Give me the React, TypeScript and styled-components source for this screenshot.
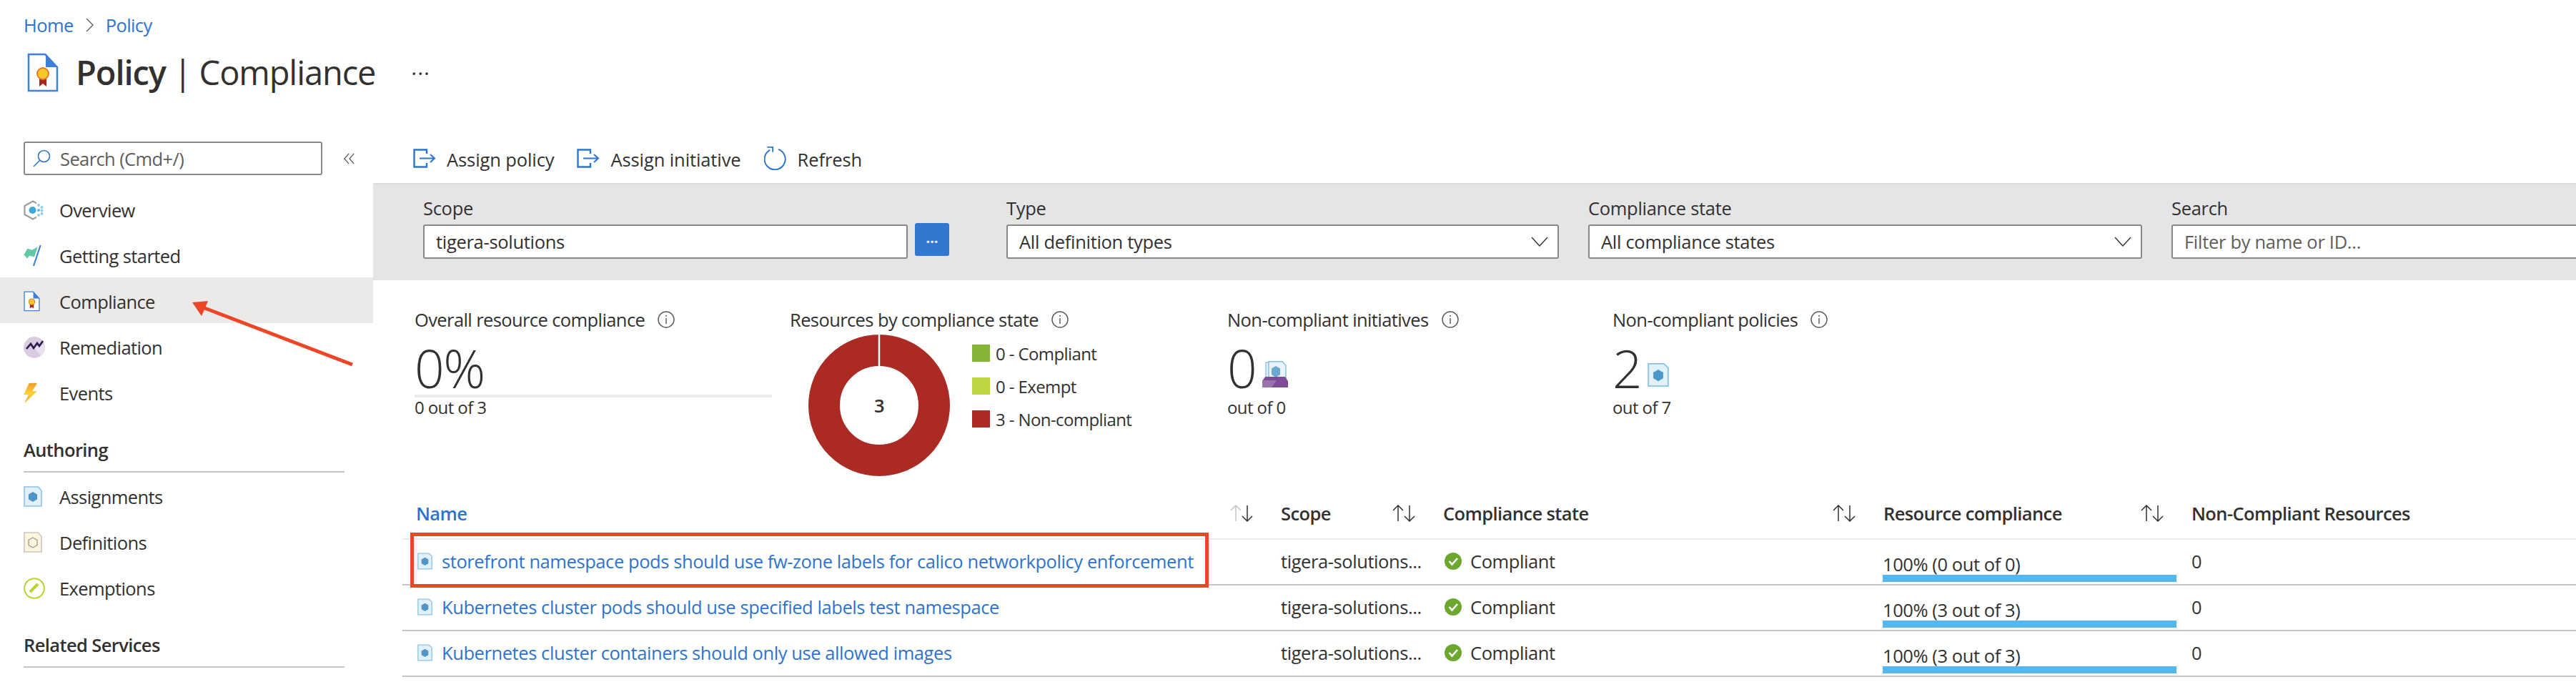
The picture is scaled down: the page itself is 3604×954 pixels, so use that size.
import React from 'react';
import styled, { createGlobalStyle } from 'styled-components';

const GlobalStyle = createGlobalStyle`
  html, body {
    margin: 0;
    padding: 0;
    background: #fff;
    font-family: "Open Sans", "Noto Sans", sans-serif;
    color: #323130;
  }
  * { box-sizing: border-box; }
`;

const LINK = '#2e74cf';
const TEXT = '#323130';

const Page = styled.div`
  position: relative;
  width: 3604px;
  height: 954px;
  overflow: hidden;
  font-size: 25.5px;
  letter-spacing: -0.6px;
`;

const Header = styled.header`
  height: 198px;
  padding: 17px 0 0 33px;
`;

const Crumbs = styled.nav`
  display: flex;
  align-items: center;
  gap: 17px;
  height: 36px;
  color: ${LINK};
`;

const TitleRow = styled.div`
  display: flex;
  align-items: center;
  margin-top: 18px;
  padding-left: 5px;
  height: 60px;
`;

const Title = styled.h1`
  margin: 0 0 0 24px;
  font-size: 47px;
  font-weight: 400;
  letter-spacing: -1.1px;
  line-height: 60px;
  b { font-weight: 600; }
`;

const More = styled.span`
  margin-left: 50px;
  font-size: 30px;
  letter-spacing: 1px;
  line-height: 20px;
  margin-top: -14px;
`;

const Body = styled.div`
  display: grid;
  grid-template-columns: 522px 1fr;
`;

const Sidebar = styled.aside`
  display: flex;
  flex-direction: column;
`;

const SearchRow = styled.div`
  display: flex;
  align-items: center;
  height: 47px;
  margin: 0 0 15px 33px;
`;

const SearchBox = styled.div`
  display: flex;
  align-items: center;
  gap: 13px;
  width: 418px;
  height: 47px;
  padding-left: 11px;
  border: 2px solid #8a8886;
  border-radius: 3px;
  color: #605e5c;
`;

const Collapse = styled.span`
  display: flex;
  margin-left: 30px;
`;

const NavRow = styled.div<{ $active?: boolean }>`
  display: flex;
  align-items: center;
  height: 64px;
  padding-left: 33px;
  padding-top: 3px;
  background: ${(p) => (p.$active ? '#ebeae8' : 'transparent')};
`;

const NavIcon = styled.span`
  display: flex;
  align-items: center;
  width: 50px;
`;

const SectionTitle = styled.div<{ $top: number }>`
  margin: ${(p) => p.$top}px 40px 0 33px;
  height: 49px;
  font-weight: 600;
  border-bottom: 2px solid #c8c6c4;
`;

const Main = styled.main`
  min-width: 0;
`;

const Toolbar = styled.div`
  display: flex;
  align-items: center;
  height: 58px;
  padding: 0 0 8px 56px;
  gap: 32px;
  letter-spacing: -0.1px;
`;

const ToolButton = styled.span`
  display: flex;
  align-items: center;
  gap: 15px;
`;

const ToolIcon = styled.span`
  display: flex;
  margin-top: -4px;
`;

const FilterPanel = styled.section`
  display: flex;
  height: 136px;
  padding: 20px 0 0 70px;
  background: #e5e5e5;
  border-top: 2px solid #dcdcdc;
  letter-spacing: -0.3px;
`;

const Field = styled.div<{ $width: number }>`
  flex: none;
  width: ${(p) => p.$width}px;
`;

const FieldLabel = styled.div`
  height: 36px;
  line-height: 27px;
`;

const FieldControls = styled.div`
  display: flex;
  gap: 10px;
`;

const Input = styled.div<{ $width: number; $muted?: boolean }>`
  display: flex;
  align-items: center;
  justify-content: space-between;
  width: ${(p) => p.$width}px;
  height: 48px;
  padding: 0 13px 0 16px;
  background: #fff;
  border: 2px solid #8a8886;
  border-radius: 3px;
  color: ${(p) => (p.$muted ? '#605e5c' : TEXT)};
`;

const DotsButton = styled.span`
  display: flex;
  align-items: center;
  justify-content: center;
  width: 48px;
  height: 46px;
  margin-top: -2px;
  padding-bottom: 6px;
  background: #3277d0;
  border-radius: 3px;
  color: #fff;
  font-weight: 700;
  font-size: 20px;
  letter-spacing: 0;
`;

const Summary = styled.section`
  display: flex;
  height: 298px;
  padding: 38px 0 0 58px;
`;

const Card = styled.div<{ $width: number }>`
  flex: none;
  width: ${(p) => p.$width}px;
`;

const CardTitle = styled.div`
  display: flex;
  align-items: center;
  gap: 18px;
  height: 34px;
`;

const BigValue = styled.div`
  display: flex;
  align-items: flex-end;
  gap: 9px;
  height: 74px;
  margin-top: 14px;
  font-size: 73px;
  font-weight: 300;
  line-height: 74px;
  letter-spacing: -1.5px;
`;

const ValueIcon = styled.span`
  display: flex;
  margin-bottom: 10px;
`;

const ValueBar = styled.div`
  width: 500px;
  height: 4px;
  background: #edebe9;
`;

const SubValue = styled.div<{ $gap?: number }>`
  height: 32px;
  line-height: 28px;
  margin-top: ${(p) => p.$gap ?? 0}px;
  font-size: 24px;
`;

const DonutRow = styled.div`
  display: flex;
  margin: 3px 0 0 26px;
`;

const DonutWrap = styled.div`
  display: grid;
  place-items: center;
  width: 198px;
  height: 200px;
  > * { grid-area: 1 / 1; }
`;

const DonutLabel = styled.span`
  font-weight: 600;
`;

const Legend = styled.ul`
  list-style: none;
  margin: 15px 0 0 31px;
  padding: 0;
  display: flex;
  flex-direction: column;
  gap: 22px;
`;

const LegendItem = styled.li`
  display: flex;
  align-items: center;
  gap: 8px;
  height: 24px;
  font-size: 24px;
`;

const Swatch = styled.span<{ $color: string }>`
  width: 25px;
  height: 24px;
  background: ${(p) => p.$color};
`;

const Table = styled.section`
  margin-left: 41px;
  letter-spacing: -0.42px;
`;

const COLUMNS = '1229px 227px 616px 431px 1fr';

const HeadRow = styled.div`
  display: grid;
  grid-template-columns: ${COLUMNS};
  height: 65px;
  align-items: center;
  padding-bottom: 7px;
  border-bottom: 2px solid #edebe9;
  font-weight: 600;
  letter-spacing: -0.6px;
`;

const HeadCell = styled.div<{ $link?: boolean; $first?: boolean }>`
  display: flex;
  align-items: center;
  justify-content: space-between;
  padding: 0 37px 0 ${(p) => (p.$first ? 19 : 0)}px;
  color: ${(p) => (p.$link ? LINK : TEXT)};
`;

const Row = styled.div`
  display: grid;
  grid-template-columns: ${COLUMNS};
  height: 64px;
  align-items: center;
  padding-bottom: 3px;
  border-bottom: 2px solid #c8c6c4;
`;

const NameCell = styled.div`
  display: flex;
  align-items: center;
  gap: 13px;
  padding-left: 21px;
  color: ${LINK};
`;

const StateCell = styled.div`
  display: flex;
  align-items: center;
  gap: 12px;
  padding-left: 2px;
`;

const ResourceCell = styled.div`
  width: 411px;
  height: 62px;
  margin: -3px 0 0 -1px;
  padding-top: 20px;
  line-height: 34px;
  border-bottom: 10px solid #54b7ee;
`;

const RedBox = styled.div`
  position: absolute;
  left: 574px;
  top: 745px;
  width: 1117px;
  height: 77px;
  border: 5px solid #ee4526;
`;

const Arrow = styled.svg`
  position: absolute;
  left: 260px;
  top: 415px;
`;

const PolicyDocIcon = ({ size = 44 }: { size?: number }) => (
  <svg width={size} height={size * 1.25} viewBox="0 0 44 55" fill="none">
    <path d="M2 2 H25 L42 20 V53 H2 Z" fill="#fff" stroke="#3f80d8" strokeWidth="2.5" />
    <path d="M26 1 L43 20 H26 Z" fill="#3f7fd6" />
    <path d="M17 30 V47 L22 43 L27 47 V30 Z" fill="#a5271f" />
    <circle cx="22" cy="29" r="8" fill="#f8c828" stroke="#e8792a" strokeWidth="2" />
  </svg>
);

const OverviewIcon = () => (
  <svg width="28" height="28" viewBox="0 0 28 28" fill="none">
    <path d="M13 1.5 L25 8 V20 L13 26.5 L1.5 20 V8 Z" stroke="#a19f9d" strokeWidth="2.2" />
    <rect x="18" y="3" width="10" height="22" fill="#fff" />
    <circle cx="12.5" cy="14" r="5" fill="#3fa7dc" />
    <circle cx="21" cy="7" r="2" fill="#8fd0ee" />
    <circle cx="25.5" cy="10" r="2" fill="#8fd0ee" />
    <circle cx="21" cy="14" r="2" fill="#5bb7e6" />
    <circle cx="25.5" cy="14.5" r="2" fill="#8fd0ee" />
    <circle cx="21" cy="21" r="2" fill="#8fd0ee" />
    <circle cx="25.5" cy="19" r="2" fill="#8fd0ee" />
  </svg>
);

const FlagIcon = () => (
  <svg width="26" height="31" viewBox="0 0 26 32" fill="none">
    <path d="M0 15 L5 6 L12 8 L20 3 L15 18 L8 16 L5 20 Z" fill="#5fc9a8" />
    <path d="M24 1 L14 31" stroke="#3a80d8" strokeWidth="2.2" />
  </svg>
);

const RemediationIcon = () => (
  <svg width="30" height="30" viewBox="0 0 30 30" fill="none">
    <circle cx="15" cy="15" r="15" fill="#d9cbe2" />
    <path d="M15 15 L29 10 A15 15 0 0 1 24 27 Z" fill="#e8e0ee" />
    <path d="M4 17 L10 10 L14 16 L19 9 L22 13 L27 6" stroke="#2c1a4a" strokeWidth="2.6" />
  </svg>
);

const BoltIcon = () => (
  <svg width="21" height="30" viewBox="0 0 22 32">
    <defs>
      <linearGradient id="bolt" x1="0" y1="0" x2="0" y2="1">
        <stop offset="0" stopColor="#f49a2c" />
        <stop offset="0.5" stopColor="#fbd23a" />
        <stop offset="1" stopColor="#f6a52e" />
      </linearGradient>
    </defs>
    <path d="M8 1 H20 L13 13 H20 L1 31 L7 18 H0 Z" fill="url(#bolt)" />
  </svg>
);

const AssignmentDoc = ({ w = 26, h = 29 }: { w?: number; h?: number }) => (
  <svg width={w} height={h} viewBox="0 0 26 29" fill="none">
    <path d="M1 1 H20 L25 6 V28 H1 Z" fill="#e1f0f9" stroke="#8cc4e6" strokeWidth="1.6" />
    <path d="M13 8 L19 11.5 V18.5 L13 22 L7 18.5 V11.5 Z" fill="#4f96c8" />
  </svg>
);

const DefinitionDoc = () => (
  <svg width="26" height="29" viewBox="0 0 26 29" fill="none">
    <path d="M1 1 H20 L25 6 V28 H1 Z" fill="#fdf5dc" stroke="#c8c6c4" strokeWidth="1.6" />
    <path d="M13 8 L19 11.5 V18.5 L13 22 L7 18.5 V11.5 Z" stroke="#a19f9d" strokeWidth="1.4" />
  </svg>
);

const ExemptIcon = () => (
  <svg width="30" height="30" viewBox="0 0 30 30" fill="none">
    <circle cx="15" cy="15" r="13.8" stroke="#b8d432" strokeWidth="2" />
    <path d="M9 20 L20 9" stroke="#b8d432" strokeWidth="4" />
  </svg>
);

const InitiativeIcon = () => (
  <svg width="36" height="37" viewBox="0 0 36 37" fill="none">
    <path d="M5 2 H24 L29 8 V26 H5 Z" fill="#e1f0f9" stroke="#8cc4e6" strokeWidth="1.4" />
    <path d="M9 0.8 H28 L33 6 V26 H9 Z" fill="#e8f3fa" stroke="#7fbde2" strokeWidth="1.4" />
    <path d="M19 7 L25 10.5 V19 L19 23 L13 19 V10.5 Z" fill="#6aa8d2" />
    <path d="M4 22 H32 L36 28 V37 H0 V28 Z" fill="#7d4b97" />
    <path d="M0 27 H20 L13 37 H0 Z" fill="#9b72ae" />
  </svg>
);

const SearchIcon = () => (
  <svg width="25" height="25" viewBox="0 0 25 25" fill="none" stroke={LINK} strokeWidth="1.6">
    <circle cx="15.5" cy="9.5" r="8" />
    <path d="M9.5 15.5 L1 24" />
  </svg>
);

const CollapseIcon = () => (
  <svg width="16" height="16" viewBox="0 0 18 18" fill="none" stroke="#605e5c" strokeWidth="1.5">
    <path d="M8 1 L1 9 L8 17" />
    <path d="M16 1 L9 9 L16 17" />
  </svg>
);

const AssignIcon = () => (
  <svg width="32" height="27" viewBox="0 0 32 27" fill="none" stroke={LINK} strokeWidth="2.4">
    <path d="M19 7 V1.5 H1.5 V25.5 H19 V20" />
    <path d="M9 13.5 H30 M24 8 L30 13.5 L24 19" strokeWidth="2" />
  </svg>
);

const RefreshIcon = () => (
  <svg width="32" height="33" viewBox="0 0 32 34" fill="none" stroke={LINK} strokeWidth="2">
    <path d="M20 4 A15 15 0 1 1 8 5" />
    <path d="M4 1 H12 V8" strokeWidth="1.8" />
  </svg>
);

const ChevronIcon = () => (
  <svg width="11" height="20" viewBox="0 0 11 20" fill="none" stroke="#605e5c" strokeWidth="1.4">
    <path d="M1 1 L10 10 L1 19" />
  </svg>
);

const DownIcon = () => (
  <svg width="24" height="14" viewBox="0 0 24 14" fill="none" stroke={TEXT} strokeWidth="1.4">
    <path d="M1 1 L12 13 L23 1" />
  </svg>
);

const InfoIcon = () => (
  <svg width="24" height="24" viewBox="0 0 24 24" fill="none">
    <circle cx="12" cy="12" r="11" stroke="#605e5c" strokeWidth="1.5" />
    <path d="M12 10 V18" stroke="#605e5c" strokeWidth="1.5" />
    <circle cx="12" cy="6.8" r="1" fill="#605e5c" />
  </svg>
);

const SortIcon = ({ faded }: { faded?: boolean }) => (
  <svg width="36" height="24" viewBox="0 0 36 24" fill="none" strokeWidth="1.5">
    <path d="M10 23 V1 M3 8 L10 1 L17 8" stroke={faded ? '#c8c6c4' : TEXT} />
    <path d="M26 1 V23 M19 16 L26 23 L33 16" stroke={TEXT} />
  </svg>
);

const CheckIcon = () => (
  <svg width="24" height="24" viewBox="0 0 24 24" fill="none">
    <circle cx="12" cy="12" r="12" fill="#6ea72f" />
    <path d="M6.5 12 L10.5 16.5 L18 8" stroke="#fff" strokeWidth="2.6" />
  </svg>
);

const Donut = () => (
  <svg width="198" height="200" viewBox="0 0 198 200" fill="none">
    <circle cx="99" cy="100" r="77" stroke="#ab2a24" strokeWidth="44" />
    <path d="M99 0 V46" stroke="#fff" strokeWidth="2.5" />
  </svg>
);

const navTop = [
  { label: 'Overview', icon: <OverviewIcon /> },
  { label: 'Getting started', icon: <FlagIcon /> },
  { label: 'Compliance', icon: <PolicyDocIcon size={23} />, active: true },
  { label: 'Remediation', icon: <RemediationIcon /> },
  { label: 'Events', icon: <BoltIcon /> },
];

const navAuthoring = [
  { label: 'Assignments', icon: <AssignmentDoc /> },
  { label: 'Definitions', icon: <DefinitionDoc /> },
  { label: 'Exemptions', icon: <ExemptIcon /> },
];

const rows = [
  { name: 'storefront namespace pods should use fw-zone labels for calico networkpolicy enforcement', res: '100% (0 out of 0)' },
  { name: 'Kubernetes cluster pods should use specified labels test namespace', res: '100% (3 out of 3)' },
  { name: 'Kubernetes cluster containers should only use allowed images', res: '100% (3 out of 3)' },
];

export default function App() {
  return (
    <Page>
      <GlobalStyle />
      <Header>
        <Crumbs>
          <span>Home</span>
          <ChevronIcon />
          <span>Policy</span>
        </Crumbs>
        <TitleRow>
          <PolicyDocIcon />
          <Title>
            <b>Policy</b> | Compliance
          </Title>
          <More>...</More>
        </TitleRow>
      </Header>
      <Body>
        <Sidebar>
          <SearchRow>
            <SearchBox>
              <SearchIcon />
              <span>Search (Cmd+/)</span>
            </SearchBox>
            <Collapse>
              <CollapseIcon />
            </Collapse>
          </SearchRow>
          {navTop.map((n) => (
            <NavRow key={n.label} $active={n.active}>
              <NavIcon>{n.icon}</NavIcon>
              {n.label}
            </NavRow>
          ))}
          <SectionTitle $top={32}>Authoring</SectionTitle>
          {navAuthoring.map((n) => (
            <NavRow key={n.label}>
              <NavIcon>{n.icon}</NavIcon>
              {n.label}
            </NavRow>
          ))}
          <SectionTitle $top={32}>Related Services</SectionTitle>
        </Sidebar>
        <Main>
          <Toolbar>
            <ToolButton>
              <ToolIcon>
                <AssignIcon />
              </ToolIcon>
              Assign policy
            </ToolButton>
            <ToolButton>
              <ToolIcon>
                <AssignIcon />
              </ToolIcon>
              Assign initiative
            </ToolButton>
            <ToolButton>
              <ToolIcon>
                <RefreshIcon />
              </ToolIcon>
              Refresh
            </ToolButton>
          </Toolbar>
          <FilterPanel>
            <Field $width={816}>
              <FieldLabel>Scope</FieldLabel>
              <FieldControls>
                <Input $width={678}>tigera-solutions</Input>
                <DotsButton>...</DotsButton>
              </FieldControls>
            </Field>
            <Field $width={814}>
              <FieldLabel>Type</FieldLabel>
              <Input $width={773}>
                All definition types
                <DownIcon />
              </Input>
            </Field>
            <Field $width={816}>
              <FieldLabel>Compliance state</FieldLabel>
              <Input $width={775}>
                All compliance states
                <DownIcon />
              </Input>
            </Field>
            <Field $width={600}>
              <FieldLabel>Search</FieldLabel>
              <Input $width={600} $muted>
                Filter by name or ID...
              </Input>
            </Field>
          </FilterPanel>
          <Summary>
            <Card $width={525}>
              <CardTitle>
                Overall resource compliance
                <InfoIcon />
              </CardTitle>
              <BigValue>0%</BigValue>
              <ValueBar />
              <SubValue>0 out of 3</SubValue>
            </Card>
            <Card $width={612}>
              <CardTitle>
                Resources by compliance state
                <InfoIcon />
              </CardTitle>
              <DonutRow>
                <DonutWrap>
                  <Donut />
                  <DonutLabel>3</DonutLabel>
                </DonutWrap>
                <Legend>
                  <LegendItem>
                    <Swatch $color="#86b535" />0 - Compliant
                  </LegendItem>
                  <LegendItem>
                    <Swatch $color="#bed641" />0 - Exempt
                  </LegendItem>
                  <LegendItem>
                    <Swatch $color="#ab2a24" />3 - Non-compliant
                  </LegendItem>
                </Legend>
              </DonutRow>
            </Card>
            <Card $width={539}>
              <CardTitle>
                Non-compliant initiatives
                <InfoIcon />
              </CardTitle>
              <BigValue>
                0
                <ValueIcon>
                  <InitiativeIcon />
                </ValueIcon>
              </BigValue>
              <SubValue $gap={4}>out of 0</SubValue>
            </Card>
            <Card $width={500}>
              <CardTitle>
                Non-compliant policies
                <InfoIcon />
              </CardTitle>
              <BigValue>
                2
                <ValueIcon>
                  <AssignmentDoc w={30} h={35} />
                </ValueIcon>
              </BigValue>
              <SubValue $gap={4}>out of 7</SubValue>
            </Card>
          </Summary>
          <Table>
            <HeadRow>
              <HeadCell $link $first>
                Name
                <SortIcon faded />
              </HeadCell>
              <HeadCell>
                Scope
                <SortIcon />
              </HeadCell>
              <HeadCell>
                Compliance state
                <SortIcon />
              </HeadCell>
              <HeadCell>
                Resource compliance
                <SortIcon />
              </HeadCell>
              <HeadCell>Non-Compliant Resources</HeadCell>
            </HeadRow>
            {rows.map((r) => (
              <Row key={r.name}>
                <NameCell>
                  <AssignmentDoc w={21} h={24} />
                  {r.name}
                </NameCell>
                <div>tigera-solutions...</div>
                <StateCell>
                  <CheckIcon />
                  Compliant
                </StateCell>
                <ResourceCell>{r.res}</ResourceCell>
                <div>0</div>
              </Row>
            ))}
          </Table>
        </Main>
      </Body>
      <RedBox />
      <Arrow width="240" height="105" viewBox="0 0 240 105" fill="none">
        <path d="M16 12 L233 95" stroke="#ee4526" strokeWidth="5" />
        <path d="M9 8 L31 6 L22 27 Z" fill="#ee4526" />
      </Arrow>
    </Page>
  );
}
